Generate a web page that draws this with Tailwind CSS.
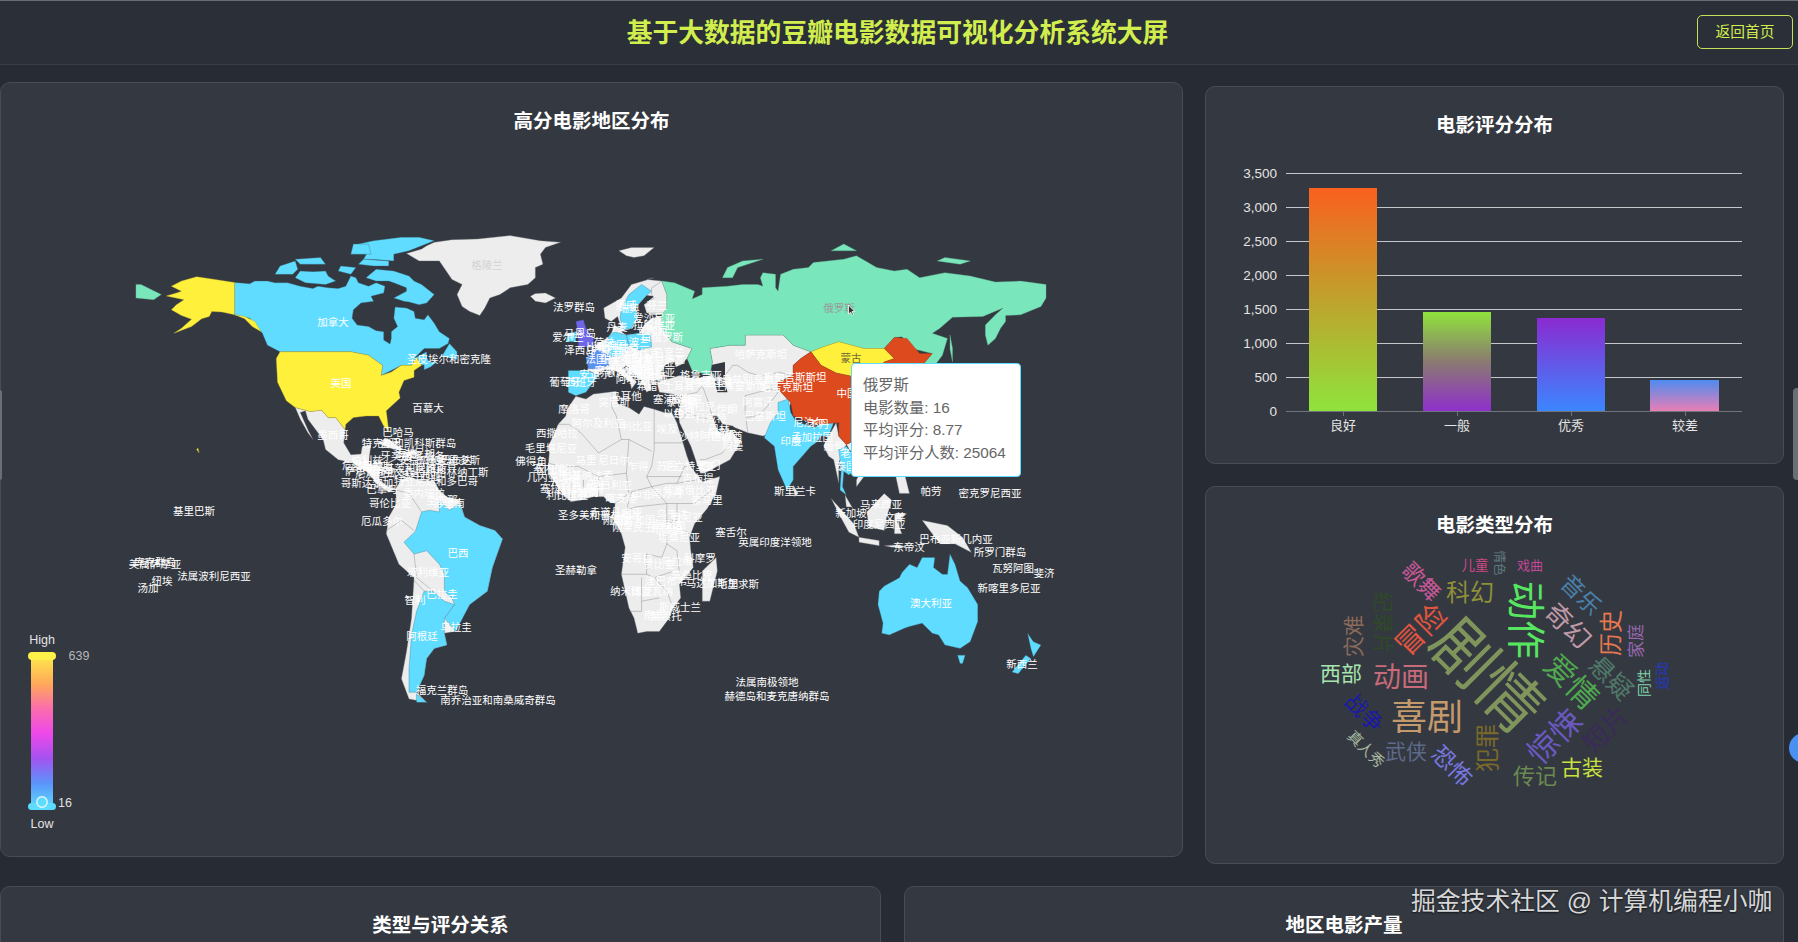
<!DOCTYPE html>
<html lang="zh-CN">
<head>
<meta charset="utf-8">
<meta name="viewport" content="width=device-width,initial-scale=1">
<title>基于大数据的豆瓣电影数据可视化分析系统大屏</title>
<script src="https://cdn.jsdelivr.net/npm/@tailwindcss/browser@4"></script>
</head>
<body class="relative h-[942px] w-[1798px] overflow-hidden bg-[#272b33] font-['Liberation_Sans','Noto_Sans_CJK_SC',sans-serif] text-white">

  <!-- Header -->
  <header class="relative flex h-[65px] items-center justify-center border-t border-b border-t-[#6a6d72] border-b-[#393d45] bg-[#2b2f37]">
    <h1 class="ml-[-3px] pt-[1px] text-[25.8px] font-bold text-[#d2ee4e]">基于大数据的豆瓣电影数据可视化分析系统大屏</h1>
    <button class="absolute right-[5px] top-[14px] h-[34px] w-[96px] rounded-[5px] border border-[#c6e05a] text-[14.7px] text-[#d2ee4e]">返回首页</button>
  </header>

  <main class="flex flex-col gap-[22px] pt-[17px]">
    <div class="flex gap-[22px]">

      <!-- Map card -->
      <section class="relative h-[775px] w-[1183px] rounded-[10px] border border-[#484c54] bg-[#343840] pt-[25px] text-center">
        <h2 class="relative z-10 text-[19.5px] font-bold leading-[26px]">高分电影地区分布</h2>

        <svg class="absolute inset-0 h-full w-full" viewBox="1 83 1181 773">
          <defs>
            <linearGradient id="legendGrad" x1="0" y1="0" x2="0" y2="1">
              <stop offset="0" stop-color="#fff04a"/>
              <stop offset=".2" stop-color="#ffa85a"/>
              <stop offset=".35" stop-color="#fb70a8"/>
              <stop offset=".52" stop-color="#ee48ea"/>
              <stop offset=".68" stop-color="#a452f0"/>
              <stop offset=".84" stop-color="#5b94fa"/>
              <stop offset="1" stop-color="#5cdcff"/>
            </linearGradient>
          </defs>

          <g transform="translate(591 517) scale(2.528 -3.37)" stroke-width=".12" stroke-linejoin="round">
            <!-- grey land -->
            <g class="fill-[#ededed] stroke-[#666a70]">
              <polygon points="-73,78.2 -68,76 -60,76 -55,70.5 -51,69 -53,66 -51,62.5 -48,61 -44,59.8 -42,62 -40,65 -36,66 -32,68 -25,69 -22,71 -22,74 -19,75 -20,78 -18,80 -12,81.5 -20,82 -32,83.5 -45,82.5 -55,82.3 -62,81.5 -65,80.5 -67,79.5"/>
              <polygon points="-24,65.5 -22,66.3 -18,66.5 -14,65 -18,63.5 -22,64"/>
              <polygon points="11,79 16,80 25,80 21,77.5 17,77 14,77.5"/>
              <polygon points="-117,32.5 -111,31.3 -106.5,31.7 -104,29.5 -101,29.5 -97.3,26 -97.8,22 -95,18.5 -91,18.7 -90.5,21 -87,21.5 -88,16 -83.5,15 -83.7,11 -80,9 -77.3,8.5 -80,7.3 -85,10 -88,13 -94,16 -100,17 -105,20 -106,23 -112,29 -113,31.5 -115,31 -112,26 -110,23 -112,25 -115,29"/>
              <polygon points="-85,22 -80,23 -74,20 -78,20"/>
              <polygon points="-74,18.5 -68.5,18.5 -70,20"/>
              <polygon points="-77.3,8.5 -75,11 -72,12 -68,11 -62,10.7 -60,8 -57,6 -52,5 -50,0 -44,-2.5 -38,-4 -35,-6.5 -39,-15 -41,-22 -48,-26 -54,-34 -58,-34.5 -57,-38 -62,-39 -65,-42 -66,-47 -69,-52 -65,-55 -72,-54 -75,-48 -73,-40 -71,-30 -70,-18 -76,-14 -81,-5 -80,0 -77,4"/>
              <polygon points="-17,15 -16.5,19 -17,21 -15,24 -13,27.5 -10,30 -9.5,32 -6,35.8 -2,35 1,36.5 10,37.3 10.5,34 11,33.5 15,32.5 19,30.5 21,32.8 25,32 29,31 32,31 34,28 36,23 38,18 39.5,15 43,11.5 44,10.5 51,12 49.5,7 46,2.5 41,-2 39,-6 39.5,-10 40.5,-15 35,-20 35.5,-24 32.5,-27 31,-30 27,-34 22,-34 18.5,-34.5 17,-30 15,-27 12,-17 13.5,-9 12,-5 9,-1 9.5,4 7,4.5 5,6 1,6 -4,5 -8,4.5 -11,6.5 -13,8.5 -15,11 -16.5,12.5"/>
              <polygon points="44,-16 49.5,-12 50,-16 47,-25 44,-25"/>
              <polygon points="-1.5,43.5 3,42 3,43 7,44 10.5,43 15.5,40 16,38 18,40 12.5,44 13.5,45.5 19.5,41 22,37 24,38 23,40.5 26,40.5 28.5,41 27.5,43 29.5,45 31,46 33,46 33.5,44.5 36,45.3 38,47 40,50 32,52 28,56 28,60 30,62 30,66 28,70 22,70.5 25,71 16,69 12,65 5,62 5.5,59 8,58 10.5,59.5 12,56 9,57 8.3,55 7,53.5 4,52 2,51"/>
              <polygon points="47,50 55,51 61,51 61,54 76,54 80,51 87,49 83,47 80,45 80,42 74,40 74,38 79,34 78,31 73,25 68,24 62,25 57,26.5 56,27 52,27.5 50,30 48,30 50,26 52,24 56,26 56.5,24.5 59.5,22.5 55,17 45,13 43.2,13 39.5,21 35,28 34.5,31 36,36 27,37 26,40 35,42 41,41 47,42 48,46"/>
              <polygon points="92,21 94,24 97,28 98,24 101,21.5 98,16 98,10 96,17 94,18"/>
              <polygon points="101,21.5 105,23 108,21.5 106,18 109,13 105,9 105,11 107,14 104,18"/>
              <polygon points="100.5,6.5 104,2 103,3 101,3"/>
              <polygon points="95,5.5 104,-2 106,-6 102,-4.5 98,1"/>
              <polygon points="106,-6 114,-7 114,-8.5 106,-7.5"/>
              <polygon points="116,-8.5 122,-8.2 125,-9 119,-9"/>
              <polygon points="109,1.5 116,7 119,5 117,0 116,-4 110,-3"/>
              <polygon points="120,1 125,1 121,-1 123,-5 120,-5"/>
              <polygon points="131,-1 141,-2.5 147,-6 150.5,-10.5 144,-8 138,-8 134,-4"/>
              <polygon points="120,18 122,18 124,13 126,7 122,7 120,14"/>
              <polygon points="130,31.5 135,34 140,35 142,40 140,41 136,36 131,34"/>
              <polygon points="140,42 145,43.5 142,45.5"/>
              <polygon points="125,38 128,41 130,42 129,36 126,34.5"/>
              <polygon points="80,9.5 82,7 80.5,6"/>
            </g>
            <!-- sea cut-outs -->
            <g class="fill-[#343840]">
              <polygon points="47,45 53,46 53,40 54,37 50,37 49,40"/>
              <polygon points="12,55 14,54 19,54.5 21,57 24,59 30,60 23,60 21,63 25,65.5 22,65.8 17.5,62 18.5,59.5 16.5,56 14,55.5"/>
            </g>
            <!-- borders -->
            <g class="fill-none stroke-[#6a6e74]">
              <polyline points="-13,27.5 -8.7,27.5 -4,25 3,19 12,23 10,30 8,33 8.5,37"/>
              <polyline points="25,32 25,20 24,15 22,12 24,9 30,4 34,4 41,4 48,8"/>
              <polyline points="25,22 37,22"/>
              <polyline points="12,23 15,23 24,19.5"/>
              <polyline points="15,23 14,13 3,12 -5,15 -12,15 -17,16"/>
              <polyline points="14,13 15,7 9.5,4"/>
              <polyline points="3,12 3,6"/>
              <polyline points="-3,11 -3,5"/>
              <polyline points="-8,10 -8,4.5"/>
              <polyline points="24,9 16,7.5 14,2 18,3 30,4"/>
              <polyline points="30,4 30,-8 28,-12 22,-11 22,-17 12,-17"/>
              <polyline points="34,4 34,-1 30,-1 39,-5"/>
              <polyline points="30,-8 34,-10 35,-17"/>
              <polyline points="22,-17 25,-18 33,-16"/>
              <polyline points="20,-18 20,-28 15,-28"/>
              <polyline points="25,-18 30,-22 32,-26"/>
              <polyline points="20,-25 27,-24"/>
              <polyline points="34,10 37,15 39,15"/>
              <polyline points="42,11 34,10 30,10 24,9"/>
              <polyline points="22,12 36,12"/>
              <polyline points="53,42 56,45 58,45 62,43 66,42 70,42 74,43 80,42"/>
              <polyline points="44,39 46,35 48,30"/>
              <polyline points="27,37 36,36 42,37 44,39"/>
              <polyline points="61,36 61,31 62,25"/>
              <polyline points="61,36 66,37 71,38 74,37 70,33 66,30 61,29.5"/>
              <polyline points="36,29 38,31 43,29.5 48,29"/>
              <polyline points="55,22 52,19 45,17 43,17"/>
              <polyline points="-77,8 -72,7 -67,1.5"/>
              <polyline points="-81,-4 -75,-1 -70,-4"/>
              <polyline points="-70,-11 -69,-18 -62.5,-22"/>
              <polyline points="-71,-18 -66,-22"/>
            </g>
            <!-- cyan countries -->
            <g class="fill-[#5fdcff] stroke-[#3c6f80]">
              <polygon points="-141,69.6 -135,69.2 -133,70 -128,70 -125,69.5 -120,69.5 -115,68.5 -110,67.8 -108,68.5 -104,68 -100,67.8 -97,68.5 -95,71.5 -93,71 -92,69.5 -88,68.5 -85,69.5 -81.5,68.5 -82,66.5 -87,65.5 -86,64 -91,63.5 -94,61.5 -94.5,59 -92.5,57 -88,56.5 -85,55.3 -82,55 -82,52.5 -79.5,51.3 -79,53 -79,55 -76.5,56.5 -78,59 -77.5,62.3 -73,62 -70,61 -69.5,59 -66,58.5 -64.5,60 -62,57.5 -60,55 -56,53 -56.5,51.5 -60,50 -66,50 -70,47 -65,49 -65,47.5 -64,46 -61,46 -63.5,44.5 -66,43.7 -66,45 -67,45.2 -69,47.3 -71,45 -75,45 -79,43.5 -83,42 -82.5,45 -88,48 -95,49 -123,49 -128,51 -130,54.5 -135,59 -141,60"/>
              <polygon points="-62,66 -65,63.5 -68,63 -72,63.8 -74,64 -78,65 -73,67 -73,68 -78,69.5 -80,70 -85,70 -89,71 -85,73.5 -78,73 -72,71.5 -70,70 -67,69"/>
              <polygon points="-117,71 -113,69.5 -105,69 -101,70 -104,71.5 -105,73 -110,72.8 -115,73"/>
              <polygon points="-90,76.5 -84,76.3 -78,76 -78,78 -72,79 -62,82 -68,83 -75,83 -86,82 -92,81 -88,79"/>
              <polygon points="-125,72 -118,72 -116,73.5 -117,76 -123,74.5"/>
              <polygon points="-92,75 -86,74.5 -80,74.5 -80,76 -90,76.5"/>
              <polygon points="-115,75 -105,75 -107,77 -117,76.5"/>
              <polygon points="-95,78 -87,78 -88,81 -94,81"/>
              <polygon points="-100,73 -95,72 -93,74 -99,74.5"/>
              <polygon points="-59,47.7 -53,46.7 -53,49 -56,51.5"/>
              <polygon points="-60,5 -60,1.5 -64,2 -67,1.5 -69.5,-4.3 -74,-7.5 -70,-11 -65,-10 -60,-14 -58,-17 -58,-22 -55,-24 -54,-26 -58,-30 -53.5,-34 -48,-26 -41,-22 -39,-15 -35,-6.5 -38,-4 -44,-2.5 -50,0 -52,4 -56,2"/>
              <polygon points="-66,-22 -62.5,-22 -58,-25 -54,-26 -58,-30 -58,-34.5 -57,-38 -62,-39 -65,-42 -66,-47 -69,-52 -72,-52 -72,-45 -71,-35 -69,-28"/>
              <polygon points="-69,-52.5 -65,-55 -69,-55"/>
              <polygon points="74,34 78,35 79,31 81,28.5 88,26.5 92,28 96,28 94,24 91,24 89,22 87,21 80,15 80,11 77.5,8 74,14 72.5,21 68.5,23.5 71,28 74,31"/>
              <polygon points="98,20 101,21 105,17 105,14 102,12.5 100,13.5 99.5,9 101,6.5 98.5,8 99,14"/>
              <polygon points="114,-22 116,-20.5 122,-18 123,-16.5 126,-14 129,-15 131,-12 136,-12 135.5,-15 139,-17 141,-17 142,-11 144,-14 146,-19 149,-21 153,-26 153,-31 150,-37 146,-39 143,-38.5 140,-38 137.5,-35 135,-34.5 131,-31.5 126,-32.5 124,-33 118,-35 115,-34.5 115.5,-31.5 113.5,-26"/>
              <polygon points="145,-41 148,-41 147,-43.5 146,-43.5"/>
              <polygon points="172.7,-34.5 175,-37 178,-38 175,-41.5 174,-39"/>
              <polygon points="172,-41 174,-42 169,-46.5 166.5,-46"/>
              <polygon points="11.5,59 13,55.5 16,56 18.5,59.5 17.5,62 22,65.8 24,67 20,69 15,66 12,62"/>
              <polygon points="-10,52 -6,52 -6,55 -9,54.5"/>
              <polygon points="-9,43.5 -1.5,43.5 3,42 0,39 -2,37 -6,36 -9,37"/>
              <polygon points="6,51 7,53.5 9,55 14,54 15,51 13,48 8,47.5 6,49.5"/>
              <polygon points="14,54 19,54.5 23.5,54 24,50.5 19,49.5 15,51"/>
            </g>
            <g class="fill-[#5a90f0] stroke-[#3f6ab0]">
              <polygon points="-2,47 -1,44 3,44 7,45 7,48 2,50"/>
            </g>
            <!-- Finland sits on the grey base, Russia and the rest have own colours -->
            <g class="fill-[#ededed] stroke-[#666a70]">
              <polygon points="22,60.5 30,60.5 30,66 28,70 24,68 24,66 25,65 21,63"/>
            </g>
            <g class="fill-[#7ae6bc] stroke-[#5fae90]">
              <polygon points="28,70 33,69.5 41,67 40,64.7 44,66 44,68 54,68.5 60,69 66,69 68,68.5 67,71 68,72.5 73,72 73,68 74,67 75,72 80,73.5 86,74 88,75.5 100,76.5 105,77.5 113,74 120,73 125,73.5 130,71 140,72.5 150,71.5 160,69.7 170,70 180,69 180,65 178,62.5 170,60 164,59.8 164,58 162,56 160,53 157,51 156,54 156,57 160,60 163,62 155,59.5 143,59.3 138,56 135,54.5 141,53 139,48 135,44 131,43 131,45 135,48.5 127,50 123,53.5 120,53.3 116,50 108,50 98,52 92,50.5 87,49 80,51 76,54 61,54 61,51 55,51 47,50 48,46 47,42 40,43.5 38,47 40,50 32,52 28,56 28,60 30,62 30,66"/>
              <polygon points="-180,65 -173,64.5 -170,66 -178,69 -180,69"/>
              <polygon points="52,71 56,71 58,74 68,76.5 60,76 54,74"/>
              <polygon points="142,54 143,50 143,46 142,50"/>
              <polygon points="137,76 146,75 150,76 140,77"/>
              <polygon points="95,79 105,79 100,81"/>
            </g>
            <g class="fill-[#fff03c] stroke-[#b8ad30]">
              <polygon points="-123,49 -95,49 -88,48 -82.5,45 -83,42 -79,43 -75,45 -71,45 -69,47.3 -67,45 -70,43.5 -70,41.5 -74,40.5 -76,37 -75.5,35.3 -81,31.5 -80,25.5 -82,27 -84,30 -89,30 -94,29.5 -97,27.5 -97.3,26 -101,29.5 -104,29.5 -106.5,31.7 -111,31.3 -117,32.5 -120.5,34.5 -124,40 -124.5,47"/>
              <polygon points="-141,69.6 -148,70.4 -156,71.3 -162,70 -166,68.5 -162,67 -164,66.5 -168,65.6 -161,64.5 -164,63 -166,61.5 -162,59.8 -158,58.7 -162,56 -165,54.5 -158,56.5 -154,58.8 -151,59.5 -150,61 -146,60.8 -141,60 -137,58.8 -134,56.5 -130.5,55 -133,58 -137,59.5 -141,60"/>
              <polygon points="-156,20 -155,19 -155.5,20.5"/>
              <polygon points="87,49 91,45 97,42.7 105,41.5 112,43 116,46 120,47 116,50 108,50 98,52 92,50.5"/>
            </g>
            <g class="fill-[#dc4a1e] stroke-[#a83a18]">
              <polygon points="116,50 120,53.3 125,53 130,48.5 135,48.5 131,45 131,43 128,41.5 124,40 121,39 118,39 122,37 120,34 122,30 119,25 114,22 110,20.5 108,21.5 105,23 101,21.5 98,24 98,28 89,27.5 80,30 79,34 74,38 74,40 80,42 80,45 83,47 87,49 91,45 97,42.7 105,41.5 112,43 116,46 120,47"/>
            </g>
            <g class="fill-[#6f66e6] stroke-[#4b4798]">
              <polygon points="-5,50 1,51 1,53 -2,56 -3,58.5 -6,58 -5,54 -5,52"/>
            </g>
          </g>

          <!-- place labels -->
          <g class="fill-white text-[10.5px]" text-anchor="middle" dominant-baseline="central">
            <text x="574" y="307">法罗群岛</text><text x="568" y="337">爱尔兰</text><text x="580" y="333">马恩岛</text><text x="580" y="350">泽西岛</text>
            <text x="333" y="322">加拿大</text><text x="449" y="359">圣皮埃尔和密克隆</text><text x="341" y="383">美国</text><text x="428" y="408">百慕大</text>
            <text x="398" y="432">巴哈马</text><text x="409" y="443">特克斯和凯科斯群岛</text><text x="333" y="435">墨西哥</text><text x="565" y="382">葡萄牙</text>
            <text x="574" y="409">摩洛哥</text><text x="557" y="433">西撒哈拉</text><text x="551" y="448">毛里塔尼亚</text><text x="531" y="461">佛得角</text>
            <text x="194" y="511">基里巴斯</text><text x="155" y="564">美属萨摩亚</text><text x="155" y="562">库克群岛</text><text x="214" y="576">法属波利尼西亚</text>
            <text x="162" y="581">纽埃</text><text x="148" y="588">汤加</text><text x="382" y="521">厄瓜多尔</text><text x="390" y="503">哥伦比亚</text><text x="442" y="500">圭亚那</text><text x="449" y="503">苏里南</text>
            <text x="458" y="553">巴西</text><text x="428" y="572">玻利维亚</text><text x="442" y="594">巴拉圭</text><text x="456" y="627">乌拉圭</text><text x="422" y="636">阿根廷</text><text x="415" y="600">智利</text>
            <text x="442" y="690">福克兰群岛</text><text x="498" y="700">南乔治亚和南桑威奇群岛</text><text x="576" y="570">圣赫勒拿</text><text x="600" y="515">圣多美和普林西比</text>
            <text x="731" y="532">塞舌尔</text><text x="775" y="542">英属印度洋领地</text><text x="637" y="558">安哥拉</text><text x="700" y="558">科摩罗</text><text x="692" y="575">莫桑比克</text>
            <text x="631" y="591">纳米比亚</text><text x="738" y="584">毛里求斯</text><text x="712" y="583">马达加斯加</text><text x="680" y="607">斯威士兰</text><text x="666" y="616">莱索托</text>
            <text x="767" y="682">法属南极领地</text><text x="777" y="696">赫德岛和麦克唐纳群岛</text>
            <text x="795" y="491">斯里兰卡</text><text x="931" y="491">帕劳</text><text x="990" y="493">密克罗尼西亚</text><text x="881" y="504">马来西亚</text><text x="851" y="513">新加坡</text><text x="895" y="517">文莱</text><text x="879" y="524">印度尼西亚</text>
            <text x="909" y="547">东帝汶</text><text x="956" y="539">巴布亚新几内亚</text><text x="1000" y="552">所罗门群岛</text><text x="1013" y="568">瓦努阿图</text><text x="1044" y="573">斐济</text><text x="1009" y="588">新喀里多尼亚</text>
            <text x="931" y="603">澳大利亚</text><text x="1022" y="664">新西兰</text><text x="791" y="441">印度</text><text x="809" y="422">尼泊尔</text><text x="812" y="437">孟加拉国</text><text x="795" y="377">吉尔吉斯斯坦</text><text x="787" y="387">塔吉克斯坦</text>
            <text x="761" y="354">哈萨克斯坦</text><text x="847" y="393">中国</text>
            <!-- Caribbean -->
            <text x="391" y="443">古巴</text><text x="406" y="453">海地</text><text x="414" y="453">多米尼加</text><text x="396" y="456">牙买加</text><text x="424" y="456">波多黎各</text><text x="435" y="460">安提瓜和巴布达</text>
            <text x="363" y="465">危地马拉</text><text x="367" y="460">伯利兹</text><text x="372" y="466">洪都拉斯</text><text x="366" y="471">萨尔瓦多</text><text x="376" y="473">尼加拉瓜</text><text x="367" y="483">哥斯达黎加</text><text x="382" y="489">巴拿马</text>
            <text x="436" y="472">圣文森特和格林纳丁斯</text><text x="436" y="481">特立尼达和多巴哥</text><text x="436" y="463">瓜德罗普</text><text x="459" y="460">巴巴多斯</text><text x="424" y="493">委内瑞拉</text><text x="410" y="468">圣基茨和尼维斯</text><text x="420" y="476">圣卢西亚</text>
            <!-- Europe -->
            <text x="626" y="305">挪威</text><text x="629" y="308">瑞典</text><text x="657" y="305">芬兰</text><text x="617" y="327">丹麦</text><text x="654" y="318">爱沙尼亚</text><text x="654" y="325">拉脱维亚</text><text x="652" y="330">立陶宛</text><text x="662" y="337">白俄罗斯</text>
            <text x="639" y="342">波兰</text><text x="616" y="345">德国</text><text x="604" y="342">荷兰</text><text x="602" y="347">比利时</text><text x="606" y="349">卢森堡</text><text x="596" y="359">法国</text><text x="611" y="359">瑞士</text><text x="626" y="357">奥地利</text>
            <text x="629" y="348">捷克</text><text x="639" y="353">斯洛伐克</text><text x="639" y="359">匈牙利</text><text x="669" y="352">乌克兰</text><text x="664" y="359">摩尔多瓦</text><text x="654" y="362">罗马尼亚</text><text x="654" y="372">保加利亚</text><text x="644" y="369">塞尔维亚</text>
            <text x="631" y="365">克罗地亚</text><text x="636" y="369">波黑</text><text x="621" y="372">意大利</text><text x="581" y="382">西班牙</text><text x="595" y="374">安道尔</text><text x="610" y="370">摩纳哥</text><text x="626" y="396">马耳他</text><text x="647" y="386">希腊</text>
            <text x="642" y="379">阿尔巴尼亚</text><text x="645" y="377">北马其顿</text><text x="639" y="374">黑山</text><text x="614" y="402">突尼斯</text><text x="598" y="423">阿尔及利亚</text><text x="637" y="426">利比亚</text><text x="667" y="429">埃及</text>
            <!-- Middle East -->
            <text x="674" y="399">塞浦路斯</text><text x="679" y="386">土耳其</text><text x="701" y="375">格鲁吉亚</text><text x="712" y="382">阿塞拜疆</text><text x="705" y="382">亚美尼亚</text><text x="687" y="399">叙利亚</text><text x="682" y="402">黎巴嫩</text>
            <text x="679" y="413">以色列</text><text x="684" y="413">约旦</text><text x="700" y="406">伊拉克</text><text x="727" y="409">伊朗</text><text x="711" y="418">科威特</text><text x="705" y="436">沙特阿拉伯</text><text x="719" y="429">巴林</text><text x="720" y="433">卡塔尔</text>
            <text x="727" y="436">阿联酋</text><text x="733" y="446">阿曼</text><text x="710" y="465">也门</text><text x="740" y="386">土库曼斯坦</text><text x="753" y="379">乌兹别克斯坦</text><text x="758" y="402">阿富汗</text><text x="765" y="416">巴基斯坦</text>
            <text x="819" y="424">不丹</text><text x="834" y="446">缅甸</text><text x="851" y="453">老挝</text><text x="846" y="466">泰国</text>
            <!-- Africa -->
            <text x="586" y="460">马里</text><text x="554" y="468">塞内加尔</text><text x="552" y="470">冈比亚</text><text x="553" y="477">几内亚比绍</text><text x="566" y="482">几内亚</text><text x="561" y="488">塞拉利昂</text><text x="567" y="495">利比里亚</text><text x="577" y="492">科特迪瓦</text>
            <text x="588" y="492">加纳</text><text x="594" y="488">多哥</text><text x="597" y="485">贝宁</text><text x="587" y="475">布基纳法索</text><text x="614" y="460">尼日尔</text><text x="611" y="485">尼日利亚</text><text x="621" y="498">喀麦隆</text><text x="638" y="466">乍得</text>
            <text x="642" y="495">中非</text><text x="667" y="466">苏丹</text><text x="667" y="493">南苏丹</text><text x="690" y="466">厄立特里亚</text><text x="690" y="490">埃塞俄比亚</text><text x="698" y="478">吉布提</text><text x="707" y="500">索马里</text><text x="687" y="517">肯尼亚</text>
            <text x="672" y="514">乌干达</text><text x="667" y="524">卢旺达</text><text x="667" y="529">布隆迪</text><text x="679" y="537">坦桑尼亚</text><text x="649" y="527">刚果民主共和国</text><text x="629" y="520">刚果共和国</text><text x="620" y="520">加蓬</text><text x="616" y="512">赤道几内亚</text>
            <text x="659" y="564">赞比亚</text><text x="677" y="561">马拉维</text><text x="666" y="581">津巴布韦</text><text x="652" y="591">博茨瓦纳</text><text x="654" y="615">南非</text>
          </g>
          <g class="text-[10.5px]" text-anchor="middle" dominant-baseline="central">
            <text class="fill-[#d4d4d4]" x="487" y="265">格陵兰</text>
            <text class="fill-[#9a9a9a]" x="839" y="308">俄罗斯</text>
            <text class="fill-[#6e6a3a]" x="851" y="358">蒙古</text>
          </g>

          <!-- mouse pointer -->
          <path class="fill-[#333] stroke-white" stroke-width=".8" d="M848.5 305l0 9 2.2-1.8 1.5 3 1.3-.7-1.5-2.9 2.8-.2z"/>

          <!-- visualMap legend -->
          <g class="text-[12.5px]" text-anchor="middle">
            <text class="fill-[#e4e4e4]" x="42" y="644">High</text>
            <rect x="31" y="653" width="22" height="155" fill="url(#legendGrad)"/>
            <rect class="fill-[#fff04a]" x="28" y="652" width="28" height="8" rx="4"/>
            <rect class="fill-[#5cdcff]" x="28" y="803" width="28" height="7" rx="3.5"/>
            <circle class="fill-[#5cdcff] stroke-[#e6f6fb]" cx="42" cy="802" r="5.2" stroke-width="1.4"/>
            <text class="fill-[#b4b6ba]" x="79" y="660">639</text>
            <text class="fill-[#e0e0e0]" x="65" y="807">16</text>
            <text class="fill-[#e4e4e4]" x="42" y="828">Low</text>
          </g>
        </svg>

        <!-- Tooltip -->
        <div class="absolute left-[850px] top-[280px] z-10 h-[114px] w-[170px] rounded-[4px] border border-[#5fdcff] bg-white pl-[11px] pt-[10px] text-left text-[15.3px] leading-[22.5px] text-[#666]">
          <div>俄罗斯</div>
          <div>电影数量: 16</div>
          <div>平均评分: 8.77</div>
          <div>平均评分人数: 25064</div>
        </div>
      </section>

      <!-- Right column -->
      <div class="mt-[4px] flex w-[579px] flex-col gap-[22px]">
        <section class="relative h-[378px] rounded-[10px] border border-[#484c54] bg-[#343840] pt-[25px] text-center">
          <h2 class="relative z-10 text-[19.5px] font-bold leading-[26px]">电影评分分布</h2>
          <svg class="absolute inset-0 h-full w-full" viewBox="1206 87 577 376">
            <defs>
              <linearGradient id="bar1" x1="0" y1="0" x2="0" y2="1"><stop offset="0" stop-color="#f9601f"/><stop offset=".5" stop-color="#bfa22c"/><stop offset="1" stop-color="#8fe33c"/></linearGradient>
              <linearGradient id="bar2" x1="0" y1="0" x2="0" y2="1"><stop offset="0" stop-color="#8fe33c"/><stop offset=".5" stop-color="#8a7a70"/><stop offset="1" stop-color="#8f30cc"/></linearGradient>
              <linearGradient id="bar3" x1="0" y1="0" x2="0" y2="1"><stop offset="0" stop-color="#8a2bd0"/><stop offset="1" stop-color="#3b86ff"/></linearGradient>
              <linearGradient id="bar4" x1="0" y1="0" x2="0" y2="1"><stop offset="0" stop-color="#4f8bf0"/><stop offset="1" stop-color="#e87fb4"/></linearGradient>
            </defs>
            <g class="stroke-[#c4c6ca]" stroke-width="1">
              <line x1="1286" x2="1742" y1="173.5" y2="173.5"/>
              <line x1="1286" x2="1742" y1="207.5" y2="207.5"/>
              <line x1="1286" x2="1742" y1="241.5" y2="241.5"/>
              <line x1="1286" x2="1742" y1="275.5" y2="275.5"/>
              <line x1="1286" x2="1742" y1="309.5" y2="309.5"/>
              <line x1="1286" x2="1742" y1="343.5" y2="343.5"/>
              <line x1="1286" x2="1742" y1="377.5" y2="377.5"/>
            </g>
            <g class="stroke-[#70747a]" stroke-width="1">
              <line x1="1286" x2="1742" y1="411.5" y2="411.5"/>
              <line x1="1343.5" x2="1343.5" y1="411" y2="416"/>
              <line x1="1457.5" x2="1457.5" y1="411" y2="416"/>
              <line x1="1571.5" x2="1571.5" y1="411" y2="416"/>
              <line x1="1685.5" x2="1685.5" y1="411" y2="416"/>
            </g>
            <rect x="1309" y="188" width="68" height="223" fill="url(#bar1)"/>
            <rect x="1423" y="312" width="68" height="99" fill="url(#bar2)"/>
            <rect x="1537" y="318" width="68" height="93" fill="url(#bar3)"/>
            <rect x="1650" y="380" width="69" height="31" fill="url(#bar4)"/>
            <g class="fill-[#e4e4e4] text-[13.5px]" text-anchor="end" dominant-baseline="central">
              <text x="1277" y="173">3,500</text>
              <text x="1277" y="207">3,000</text>
              <text x="1277" y="241">2,500</text>
              <text x="1277" y="275">2,000</text>
              <text x="1277" y="309">1,500</text>
              <text x="1277" y="343">1,000</text>
              <text x="1277" y="377">500</text>
              <text x="1277" y="411">0</text>
            </g>
            <g class="fill-[#e4e4e4] text-[13px]" text-anchor="middle" dominant-baseline="central">
              <text x="1343" y="425">良好</text>
              <text x="1457" y="425">一般</text>
              <text x="1571" y="425">优秀</text>
              <text x="1685" y="425">较差</text>
            </g>
          </svg>
        </section>

        <section class="relative h-[378px] rounded-[10px] border border-[#484c54] bg-[#343840] pt-[25px] text-center">
          <h2 class="relative z-10 text-[19.5px] font-bold leading-[26px]">电影类型分布</h2>
          <svg class="absolute inset-0 h-full w-full" viewBox="1206 487 577 376">
            <g text-anchor="middle" dominant-baseline="central">
              <text class="fill-[#80955c] text-[64px]" transform="translate(1486 676) rotate(45)">剧情</text>
              <text class="fill-[#57e660] text-[39px]" transform="translate(1525 620) rotate(90)">动作</text>
              <text class="fill-[#c49a6c] text-[36px]" transform="translate(1427 717)">喜剧</text>
              <text class="fill-[#c76a7a] text-[28px]" transform="translate(1401 677)">动画</text>
              <text class="fill-[#e0553f] text-[29px]" transform="translate(1421 630) rotate(-45)">冒险</text>
              <text class="fill-[#8f8f3a] text-[24px]" transform="translate(1470 592)">科幻</text>
              <text class="fill-[#c85898] text-[22px]" transform="translate(1421 582) rotate(45)">歌舞</text>
              <text class="fill-[#a8e6b0] text-[21px]" transform="translate(1341 673)">西部</text>
              <text class="fill-[#8a6a5a] text-[21px]" transform="translate(1353 636) rotate(-90)">灾难</text>
              <text class="fill-[#2e4a28] text-[21px]" transform="translate(1383 623) rotate(90)">纪录片</text>
              <text class="fill-[#1a1aa8] text-[22px]" transform="translate(1364 713) rotate(45)">战争</text>
              <text class="fill-[#a8b8a0] text-[15px]" transform="translate(1366 749) rotate(45)">真人秀</text>
              <text class="fill-[#5e6a8a] text-[21px]" transform="translate(1406 751)">武侠</text>
              <text class="fill-[#7878e0] text-[23px]" transform="translate(1452 766) rotate(45)">恐怖</text>
              <text class="fill-[#7a6a2a] text-[24px]" transform="translate(1487 748) rotate(-90)">犯罪</text>
              <text class="fill-[#6a8a50] text-[22px]" transform="translate(1535 776)">传记</text>
              <text class="fill-[#c8e040] text-[21px]" transform="translate(1582 767)">古装</text>
              <text class="fill-[#6a5ac0] text-[31px]" transform="translate(1555 737) rotate(-45)">惊悚</text>
              <text class="fill-[#3a2a5a] text-[26px]" transform="translate(1606 729) rotate(-45)">短片</text>
              <text class="fill-[#50a850] text-[31px]" transform="translate(1571 682) rotate(45)">爱情</text>
              <text class="fill-[#507868] text-[25px]" transform="translate(1611 678) rotate(45)">悬疑</text>
              <text class="fill-[#c09aa8] text-[26px]" transform="translate(1568 626) rotate(45)">奇幻</text>
              <text class="fill-[#4a80a8] text-[23px]" transform="translate(1581 595) rotate(45)">音乐</text>
              <text class="fill-[#e87850] text-[23px]" transform="translate(1611 633) rotate(-90)">历史</text>
              <text class="fill-[#9868b0] text-[17px]" transform="translate(1636 641) rotate(-90)">家庭</text>
              <text class="fill-[#80d0a8] text-[14px]" transform="translate(1644 683) rotate(-90)">同性</text>
              <text class="fill-[#2838a0] text-[14px] font-bold" transform="translate(1662 676) rotate(-90)">运动</text>
              <text class="fill-[#d04888] text-[13.5px]" transform="translate(1475 565)">儿童</text>
              <text class="fill-[#c04898] text-[13px]" transform="translate(1530 565)">戏曲</text>
              <text class="fill-[#5f7a80] text-[12.5px]" transform="translate(1499 563) rotate(90)">情色</text>
            </g>
          </svg>
        </section>
      </div>
    </div>

    <!-- Bottom row, cut by the window -->
    <div class="flex gap-[23px]">
      <section class="h-[300px] w-[881px] rounded-[10px] border border-[#484c54] bg-[#343840] pt-[25px] text-center">
        <h2 class="text-[19.5px] font-bold leading-[26px]">类型与评分关系</h2>
      </section>
      <section class="h-[300px] w-[880px] rounded-[10px] border border-[#484c54] bg-[#343840] pt-[25px] text-center">
        <h2 class="text-[19.5px] font-bold leading-[26px]">地区电影产量</h2>
      </section>
    </div>
  </main>

  <!-- Overlays: edge handles and the site's watermark -->
  <div class="absolute left-0 top-[390px] h-[90px] w-[2px] rounded-r bg-[#6a6e75]"></div>
  <div class="absolute right-0 top-[388px] h-[92px] w-[5px] rounded-l bg-[#6a6e75]"></div>
  <div class="absolute left-[1789px] top-[733px] h-[30px] w-[30px] rounded-full bg-[#4a90f0]"></div>
  <div class="absolute left-[1411px] top-[887px] text-[24.8px] leading-[30px] text-[#d6d7d9] [text-shadow:0_1px_2px_rgba(0,0,0,.7)]">掘金技术社区 @ 计算机编程小咖</div>
</body>
</html>
